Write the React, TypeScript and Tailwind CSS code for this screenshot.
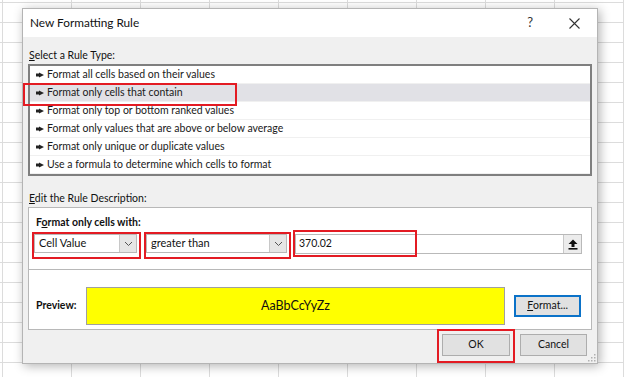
import React from 'react'

const ruleTypes = [
  'Format all cells based on their values',
  'Format only cells that contain',
  'Format only top or bottom ranked values',
  'Format only values that are above or below average',
  'Format only unique or duplicate values',
  'Use a formula to determine which cells to format',
]

function Pointer() {
  return (
    <svg width="8" height="6" viewBox="0 0 8 6" className="shrink-0">
      <path d="M0 1.6 L3 1.6 L3 0.6 L8 3 L3 5.4 L3 4.4 L0 4.4 Z" fill="#222" />
    </svg>
  )
}

function Chevron() {
  return (
    <svg width="9" height="6" viewBox="0 0 9 6">
      <path d="M1 1 L4.5 4.5 L8 1" fill="none" stroke="#555" strokeWidth="1" />
    </svg>
  )
}

function Combo({ value, width }: { value: string; width: string }) {
  return (
    <div className={`flex h-[19px] items-stretch border border-[#b9b9b9] bg-white ${width}`}>
      <div className="flex flex-1 items-center pl-[4px] text-[11px] text-[#111]">{value}</div>
      <div className="flex w-[17px] items-center justify-center border-l border-[#c8c8c8] bg-[#e6e6e6]">
        <Chevron />
      </div>
    </div>
  )
}

export default function App() {
  return (
    <div
      className="h-[377px] w-[624px] overflow-hidden bg-white bg-[linear-gradient(to_right,#dcdcdc_1px,transparent_1px),linear-gradient(to_bottom,#dcdcdc_1px,transparent_1px)] bg-[size:69px_20px] bg-[position:2px_2px] pl-[22px] pt-[8px]"
      style={{ fontFamily: 'Lato, Roboto, "Liberation Sans", sans-serif' }}
    >
      <div className="relative flex h-[356px] w-[576px] flex-col border border-[#b4b4b4] bg-[#f0f0f0] shadow-[2px_2px_10px_rgba(0,0,0,0.3)]">
        {/* title bar */}
        <div className="flex h-[29px] items-center bg-white pl-[7px] text-[11.8px] text-[#111]">
          <span className="flex-1">New Formatting Rule</span>
          <span className="mr-[36px] text-[13px] text-[#333]">?</span>
          <svg width="11" height="11" viewBox="0 0 11 11" className="mr-[17px]">
            <path d="M0.5 0.5 L10.5 10.5 M10.5 0.5 L0.5 10.5" stroke="#333" strokeWidth="1.1" />
          </svg>
        </div>

        <div className="flex flex-col px-[5px]">
          <div className="mt-[10px] h-[16px] pl-[1px] text-[10.5px] leading-[16px] text-[#111]">
            <span className="underline">S</span>elect a Rule Type:
          </div>

          {/* rule type list */}
          <div className="relative mt-[1px] flex flex-col border-2 border-[#7f7f7f] bg-white">
            {ruleTypes.map((t, i) => (
              <div
                key={t}
                className={`flex h-[18px] items-center gap-[3px] border-b border-[#f0f0f0] pl-[6px] text-[10.5px] text-[#1a1a1a] last:border-b-0 ${
                  i === 1 ? 'bg-[#e1e1e6]' : ''
                }`}
              >
                <Pointer />
                <span>{t}</span>
              </div>
            ))}
            <div className="absolute left-[-7px] top-[17px] h-[23px] w-[214px] border-2 border-[#e31b23]" />
          </div>

          <div className="mt-[14px] h-[16px] pl-[1px] text-[10.5px] leading-[16px] text-[#111]">
            <span className="underline">E</span>dit the Rule Description:
          </div>

          {/* rule description group */}
          <div className="mt-[1px] flex flex-col border border-[#b8b8b8] bg-white">
            <div className="flex flex-col pb-[10px] pl-[3px] pr-[9px] pt-[6px]">
              <div className="h-[16px] pl-[4px] text-[10.5px] font-bold leading-[16px] text-[#111]">
                F<span className="underline">o</span>rmat only cells with:
              </div>
              <div className="mt-[2px] flex items-start">
                <div className="border-2 border-[#e31b23] pb-[4px] pr-[2px]">
                  <Combo value="Cell Value" width="w-[103px]" />
                </div>
                <div className="ml-[3px] border-2 border-[#e31b23] pb-[4px] pr-[2px]">
                  <Combo value="greater than" width="w-[141px]" />
                </div>
                <div className="relative ml-[4px] flex-1 pt-[2px]">
                  <div className="flex h-[20px] items-stretch border border-[#b9b9b9] bg-white">
                    <div className="flex flex-1 items-center pl-[3px] text-[10.5px] text-[#111]">370.02</div>
                    <div className="flex w-[18px] items-center justify-center border-l border-[#c8c8c8] bg-[#ececec]">
                      <svg width="10" height="11" viewBox="0 0 10 11">
                        <path d="M5 0.5 L9.5 5 L6.5 5 L6.5 8 L3.5 8 L3.5 5 L0.5 5 Z" fill="#111" />
                        <rect x="0.5" y="9" width="9" height="1.6" fill="#111" />
                      </svg>
                    </div>
                  </div>
                  <div className="absolute left-[-2px] top-[-2px] h-[27px] w-[124px] border-2 border-[#e31b23]" />
                </div>
              </div>
            </div>

            <div className="h-[1px] bg-[#b8b8b8]" />

            <div className="flex items-center pb-[4px] pr-[10px] pt-[17px]">
              <div className="w-[57px] pl-[7px] text-[10.5px] font-bold text-[#111]">Preview:</div>
              <div className="flex h-[38px] w-[419px] items-center justify-center border border-[#a0a0a0] bg-[#ffff00] text-[12.5px] text-[#111]">
                AaBbCcYyZz
              </div>
              <div className="ml-[9px] flex h-[22px] w-[67px] items-center justify-center border-2 border-[#0b72c8] bg-[#e1e1e1] text-[10.5px] text-[#111]">
                <span className="underline">F</span>ormat...
              </div>
            </div>
          </div>

          {/* buttons */}
          <div className="mt-[-1px] flex items-start justify-end pr-[5px]">
            <div className="border-2 border-[#e31b23] p-[3px] pb-[5px]">
              <div className="flex h-[22px] w-[68px] items-center justify-center border border-[#adadad] bg-[#e1e1e1] text-[10.5px] text-[#111]">
                OK
              </div>
            </div>
            <div className="ml-[5px] mt-[5px] flex h-[22px] w-[67px] items-center justify-center border border-[#adadad] bg-[#e1e1e1] text-[10.5px] text-[#111]">
              Cancel
            </div>
          </div>
        </div>

        <svg width="8" height="8" viewBox="0 0 8 8" className="absolute bottom-[1px] right-[1px]">
          <rect x="6" y="0" width="1.5" height="1.5" fill="#b0b0b0" />
          <rect x="3" y="3" width="1.5" height="1.5" fill="#b0b0b0" />
          <rect x="6" y="3" width="1.5" height="1.5" fill="#b0b0b0" />
          <rect x="0" y="6" width="1.5" height="1.5" fill="#b0b0b0" />
          <rect x="3" y="6" width="1.5" height="1.5" fill="#b0b0b0" />
          <rect x="6" y="6" width="1.5" height="1.5" fill="#b0b0b0" />
        </svg>
      </div>
    </div>
  )
}
